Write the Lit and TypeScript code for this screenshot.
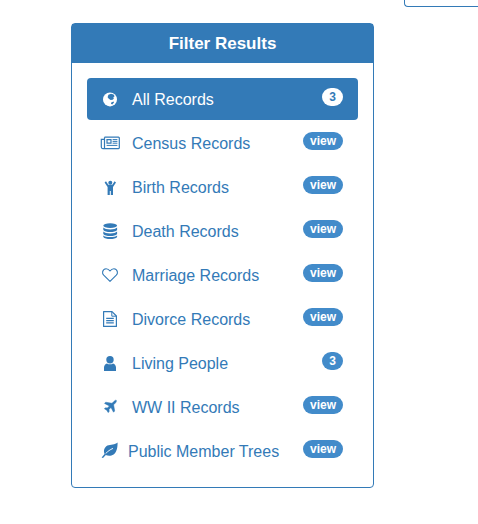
import { css, html, LitElement, svg } from "lit";
import { customElement } from "lit/decorators.js";

const icons = {
    globe: svg`
        <circle cx="10" cy="10.4" r="7" fill="currentColor"></circle>
        <path fill="#337ab7" d="M8.4 5.8 11 4.8 13.6 5.6 14.6 7.2 13.4 8.2 13.8 9.8 12.6 10.8 10.6 11 8.8 9.8 7.6 8.2ZM11.2 13.4 13.6 12.6 14 13.6 12.2 15.4 11 14.8Z"></path>`,
    news: svg`
        <path fill="none" stroke="currentColor" stroke-width="1.2" d="M4.5 4.2H18.5A.8.8 0 0 1 19.3 5V14.8A.8.8 0 0 1 18.5 15.6H2.8A1.5 1.5 0 0 1 1.3 14.1V6.3H4.5M4.5 4.2V15"></path>
        <path fill="none" stroke="currentColor" stroke-width="1.2" d="M7 6.6H11V10.2H7Z"></path>
        <path fill="none" stroke="currentColor" d="M12.6 6.6H17.4M12.6 8.4H17.4M12.6 10.2H17.4M6.6 12.4H17.4"></path>`,
    child: svg`
        <circle cx="10.3" cy="5.8" r="2"></circle>
        <path d="M4.6 5.4 6 4.3 8.3 7.8H12.3L14.6 4.3 16 5.4 13 10V18H10.8V14H9.8V18H7.6V10Z"></path>`,
    database: svg`
        <ellipse cx="10.2" cy="4.6" rx="6.9" ry="2.4"></ellipse>
        <path d="M3.3 6.6C4.4 8 7 8.4 10.2 8.4S16 8 17.1 6.6V9C16 10.6 13.4 11 10.2 11S4.4 10.6 3.3 9Z"></path>
        <path d="M3.3 10.6C4.4 12 7 12.4 10.2 12.4S16 12 17.1 10.6V13C16 14.6 13.4 15 10.2 15S4.4 14.6 3.3 13Z"></path>
        <path d="M3.3 14.4C4.4 15.8 7 16.1 10.2 16.1S16 15.8 17.1 14.4V16C16 17.6 13.4 18 10.2 18S4.4 17.6 3.3 16Z"></path>`,
    heart: svg`
        <path fill="none" stroke="currentColor" stroke-width="1.1" stroke-linejoin="round" d="M10 16.4 3.7 10.2C2.6 9 2.4 7.9 2.6 6.8 3 5 4.4 3.7 6.1 3.7 7.8 3.7 9 4.6 10 6 11 4.6 12.2 3.7 13.9 3.7 15.6 3.7 17 5 17.4 6.8 17.6 7.9 17.4 9 16.3 10.2Z"></path>`,
    file: svg`
        <path fill="none" stroke="currentColor" stroke-width="1.2" stroke-linejoin="round" d="M3.6 2.6H12L16.4 7V17.4H3.6Z"></path>
        <path fill="none" stroke="currentColor" d="M11.8 2.8V7.2H16.2"></path>
        <path fill="none" stroke="currentColor" stroke-width="1.3" d="M6.2 9.4H13.8M6.2 11.6H13.8M6.2 13.8H13.8"></path>`,
    user: svg`
        <circle cx="10" cy="6.8" r="3.7"></circle>
        <path d="M4 18V14.6C4 12.4 5.2 10.8 7 10.4 8.6 11.6 11.4 11.6 13 10.4 14.8 10.8 16 12.4 16 14.6V18Z"></path>`,
    plane: svg`
        <path stroke="currentColor" stroke-width=".5" stroke-linejoin="round" d="M16.2 3.2C16.7 3.7 16.3 5 15.4 6L13.6 7.8 14.7 14 13.5 15.2 11 10.4 9 12.4 9.2 14.6 8.1 15.6 6.8 13.2 4.4 11.8 5.4 10.8 7.4 11 9.4 8.9 4.5 6.4 5.7 5.2 12 6.3 13.8 4.5C14.7 3.6 15.7 2.9 16.2 3.2Z"></path>`,
    leaf: svg`
        <path d="M17.6 1.4C17.6 6 17 11 13.6 13.4 11 15.2 8 15 5.8 14L3 17 1.6 16.6 4.6 13C3.2 10 4.2 6.4 7.4 4.6 10.6 3 15 4 17.6 1.4Z"></path>
        <path fill="none" stroke="white" stroke-width=".9" d="M5.6 12.6C7.8 10.4 10 8.6 13 7.4"></path>`,
};

const records = [
    { label: "All Records", icon: icons.globe, badge: "3", active: true },
    { label: "Census Records", icon: icons.news, badge: "view" },
    { label: "Birth Records", icon: icons.child, badge: "view" },
    { label: "Death Records", icon: icons.database, badge: "view" },
    { label: "Marriage Records", icon: icons.heart, badge: "view" },
    { label: "Divorce Records", icon: icons.file, badge: "view" },
    { label: "Living People", icon: icons.user, badge: "3" },
    { label: "WW II Records", icon: icons.plane, badge: "view" },
    { label: "Public Member Trees", icon: icons.leaf, badge: "view", tight: true },
];

@customElement("app-root")
class AppRootElement extends LitElement {
    render() {
        return html`
      <div class="top-box"></div>
      <section class="panel">
        <h3>Filter Results</h3>
        <ul>
          ${records.map(
              (r) => html`
            <li class="${r.active ? "active" : ""} ${r.tight ? "tight" : ""}">
              <svg viewBox="0 0 20 20" width="20" height="20" fill="currentColor">${r.icon}</svg>
              <span class="label">${r.label}</span>
              <span class="badge">${r.badge}</span>
            </li>
          `,
          )}
        </ul>
      </section>
    `;
    }

    static styles = css`
    :host{
        display: block;
        height: 524px;
        overflow: hidden;
        background: white;
        font-family: "Liberation Sans", Arial, sans-serif;
    }
    .top-box{
        height: 6px;
        margin-left: 404px;
        border: 1px solid #337ab7;
        border-top: none;
        border-right: none;
        border-bottom-left-radius: 4px;
    }
    .panel{
        width: 303px;
        box-sizing: border-box;
        margin: 16px 0 0 71px;
        border: 1px solid #337ab7;
        border-radius: 4px;
    }
    h3{
        margin: 0;
        height: 39px;
        background-color: #337ab7;
        color: white;
        font-size: 17px;
        font-weight: bold;
        line-height: 39px;
        text-align: center;
    }
    ul{
        list-style: none;
        margin: 0;
        padding: 15px;
    }
    li{
        display: flex;
        height: 42px;
        box-sizing: border-box;
        padding: 10px 15px 10px 13px;
        margin-bottom: 2px;
        border-radius: 4px;
        color: #337ab7;
        font-size: 16px;
        line-height: 22px;
    }
    li:last-child{
        margin-bottom: 0;
    }
    li.active{
        background-color: #337ab7;
        color: white;
    }
    svg{
        flex: none;
        margin: 1px 12px 1px 0;
    }
    .tight svg{
        margin-right: 8px;
    }
    .label{
        flex: 1;
        margin-top: 1px;
        white-space: nowrap;
    }
    .badge{
        height: 18px;
        padding: 0 7px;
        border-radius: 10px;
        background-color: #428bca;
        color: white;
        font-size: 12px;
        font-weight: bold;
        line-height: 18px;
    }
    .active .badge{
        background-color: white;
        color: #337ab7;
    }
  `;
}
